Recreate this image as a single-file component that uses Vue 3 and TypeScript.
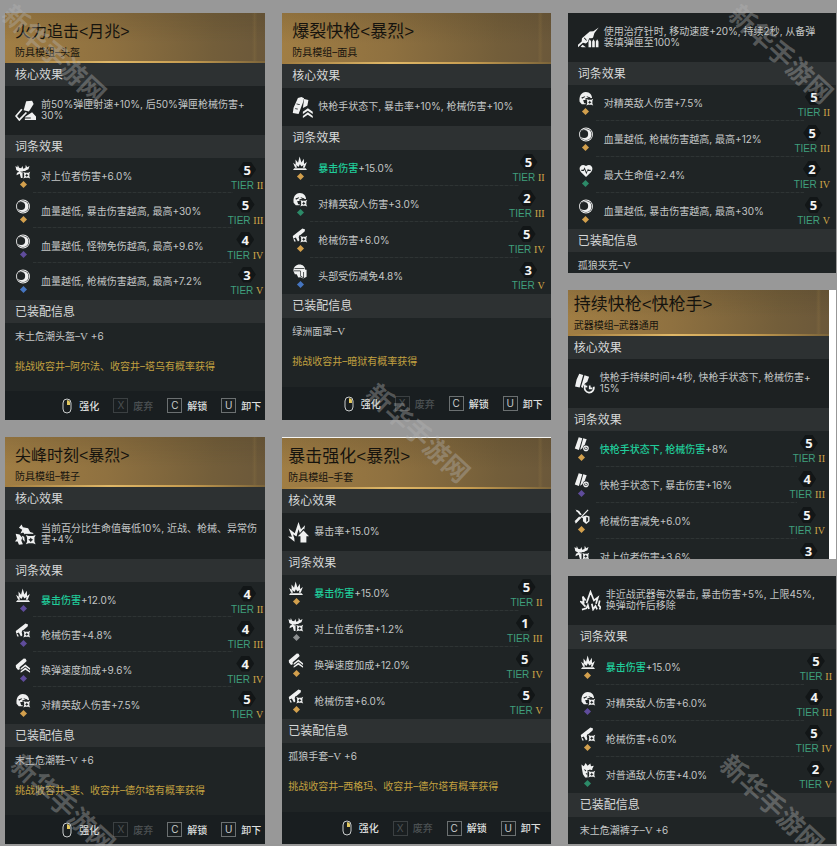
<script setup lang="ts">
type Grade = 'gold' | 'purple' | 'blue' | 'green' | 'gray'

interface Affix {
  icon: string
  grade: Grade
  hot?: string
  text: string
  level: number
}

interface Card {
  id: string
  look: string[]
  title?: string
  kind?: string
  core: string
  coreIcon: string
  affixes: Affix[]
  gear?: string
  plus?: string
  source?: string
  actions?: boolean
}

const tiers = ['II', 'III', 'IV', 'V']

const actions = [
  { key: 'X', label: '废弃', disabled: true },
  { key: 'C', label: '解锁', disabled: false },
  { key: 'U', label: '卸下', disabled: false },
]

const columns: Card[][] = [
  [
    {
      id: 'fire',
      look: [],
      title: '火力追击<月兆>',
      kind: '防具模组–头盔',
      core: '前50%弹匣射速+10%, 后50%弹匣枪械伤害+\n30%',
      coreIcon: 'magUp',
      affixes: [
        { icon: 'deer', grade: 'gold', text: '对上位者伤害+6.0%', level: 5 },
        { icon: 'moon', grade: 'gold', text: '血量越低, 暴击伤害越高, 最高+30%', level: 5 },
        { icon: 'moon', grade: 'purple', text: '血量越低, 怪物免伤越高, 最高+9.6%', level: 4 },
        { icon: 'moon', grade: 'blue', text: '血量越低, 枪械伤害越高, 最高+7.2%', level: 3 },
      ],
      gear: '末土危潮头盔–',
      plus: '+6',
      source: '挑战收容井–阿尔法、收容井–塔乌有概率获得',
      actions: true,
    },
    {
      id: 'peak',
      look: [],
      title: '尖峰时刻<暴烈>',
      kind: '防具模组–鞋子',
      core: '当前百分比生命值每低10%, 近战、枪械、异常伤\n害+4%',
      coreIcon: 'beast',
      affixes: [
        { icon: 'crit', grade: 'purple', hot: '暴击伤害', text: '+12.0%', level: 4 },
        { icon: 'gun', grade: 'purple', text: '枪械伤害+4.8%', level: 4 },
        { icon: 'reload', grade: 'purple', text: '换弹速度加成+9.6%', level: 4 },
        { icon: 'elite', grade: 'gold', text: '对精英敌人伤害+7.5%', level: 5 },
      ],
      gear: '末土危潮鞋–',
      plus: '+6',
      source: '挑战收容井–斐、收容井–德尔塔有概率获得',
      actions: true,
    },
  ],
  [
    {
      id: 'burst',
      look: ['roomy', 'tall-foot'],
      title: '爆裂快枪<暴烈>',
      kind: '防具模组–面具',
      core: '快枪手状态下, 暴击率+10%, 枪械伤害+10%',
      coreIcon: 'magChevron',
      affixes: [
        { icon: 'crit', grade: 'gold', hot: '暴击伤害', text: '+15.0%', level: 5 },
        { icon: 'elite', grade: 'green', text: '对精英敌人伤害+3.0%', level: 2 },
        { icon: 'gun', grade: 'gold', text: '枪械伤害+6.0%', level: 5 },
        { icon: 'head', grade: 'blue', text: '头部受伤减免4.8%', level: 3 },
      ],
      gear: '绿洲面罩–',
      source: '挑战收容井–暗狱有概率获得',
      actions: true,
    },
    {
      id: 'crit',
      look: ['roomy', 'near', 'edge-top'],
      title: '暴击强化<暴烈>',
      kind: '防具模组–手套',
      core: '暴击率+15.0%',
      coreIcon: 'burstUp',
      affixes: [
        { icon: 'crit', grade: 'gold', hot: '暴击伤害', text: '+15.0%', level: 5 },
        { icon: 'deer', grade: 'gray', text: '对上位者伤害+1.2%', level: 1 },
        { icon: 'reload', grade: 'gold', text: '换弹速度加成+12.0%', level: 5 },
        { icon: 'gun', grade: 'gold', text: '枪械伤害+6.0%', level: 5 },
      ],
      gear: '孤狼手套–',
      plus: '+6',
      source: '挑战收容井–西格玛、收容井–德尔塔有概率获得',
      actions: true,
    },
  ],
  [
    {
      id: 'jacket',
      look: ['short', 'wide-end'],
      core: '使用治疗针时, 移动速度+20%, 持续2秒, 从备弹\n装填弹匣至100%',
      coreIcon: 'syringe',
      affixes: [
        { icon: 'elite', grade: 'gold', text: '对精英敌人伤害+7.5%', level: 5 },
        { icon: 'moon', grade: 'gold', text: '血量越低, 枪械伤害越高, 最高+12%', level: 5 },
        { icon: 'heart', grade: 'green', text: '最大生命值+2.4%', level: 2 },
        { icon: 'moon', grade: 'gold', text: '血量越低, 暴击伤害越高, 最高+30%', level: 5 },
      ],
      gear: '孤狼夹克–',
    },
    {
      id: 'lasting',
      look: ['near', 'cropped'],
      title: '持续快枪<快枪手>',
      kind: '武器模组–武器通用',
      core: '快枪手持续时间+4秒, 快枪手状态下, 枪械伤害+\n15%',
      coreIcon: 'magClock',
      affixes: [
        { icon: 'mags', grade: 'gold', hot: '快枪手状态下, 枪械伤害', text: '+8%', level: 5 },
        { icon: 'mags', grade: 'purple', text: '快枪手状态下, 暴击伤害+16%', level: 4 },
        { icon: 'guard', grade: 'gold', text: '枪械伤害减免+6.0%', level: 5 },
        { icon: 'deer', grade: 'blue', text: '对上位者伤害+3.6%', level: 3 },
      ],
    },
    {
      id: 'trousers',
      look: ['roomy', 'far', 'short'],
      core: '非近战武器每次暴击, 暴击伤害+5%, 上限45%,\n换弹动作后移除',
      coreIcon: 'burst',
      affixes: [
        { icon: 'crit', grade: 'gold', hot: '暴击伤害', text: '+15.0%', level: 5 },
        { icon: 'elite', grade: 'purple', text: '对精英敌人伤害+6.0%', level: 4 },
        { icon: 'gun', grade: 'gold', text: '枪械伤害+6.0%', level: 5 },
        { icon: 'brute', grade: 'green', text: '对普通敌人伤害+4.0%', level: 2 },
      ],
      gear: '末土危潮裤子–',
      plus: '+6',
    },
  ],
]

// Each glyph is a list of layers: w = filled white, d = filled in the panel colour, l = white line.
type Layer = ['w' | 'd' | 'l', string]
const star: Layer[] = [
  ['d', 'M7.5 7.5h8.5v8.5h-8.5z'],
  ['w', 'M8.3 8.3l2 .9h3.4l2-.9-.9 2v3.2l.9 2-2-.9h-3.4l-2 .9.9-2v-3.2z'],
  ['d', 'M12 10.2l.7 1.2 1.2.6-1.2.7-.7 1.2-.7-1.2-1.2-.7 1.2-.6z'],
]
const glyphs: Record<string, Layer[]> = {
  moon: [
    ['w', 'M8 .6a7.4 7.4 0 1 1 0 14.8a7.4 7.4 0 1 1 0-14.8z'],
    ['d', 'M8 1.5a6.5 6.5 0 1 1 0 13a6.5 6.5 0 1 1 0-13z'],
    ['w', 'M8 2.1a5.9 5.9 0 1 1 0 11.8a5.9 5.9 0 1 1 0-11.8z'],
    ['d', 'M6 3.2a4.3 4.3 0 1 1 0 8.6a4.3 4.3 0 1 1 0-8.6z'],
  ],
  heart: [
    ['w', 'M8 15L2.5 9.5C-1 5.5 3-.5 8 3.2C13-.5 17 5.5 13.5 9.5z'],
    ['d', 'M3 7.300h2.200L6.500 4.500l2 5.200 1.600-3.500.8 1.100H13v1.200h-2.800l-.3-.5L8.400 12 6.400 7l-.7 1.500H3z'],
  ],
  crit: [
    ['w', 'M.5 15l1.400-2h12.200l1.400 2z'],
    ['w', 'M2.800 12.600L.6 7.200l2.800 2L3.200 3.600l2.700 3.600L7.600.5l1.900 6.400 2.600-4 .2 5.500 3-1.900-2.300 6.100h-2l.8-3-2.300 1.600L7.900 8.800l-1.500 2.900L4 9.500l.8 3.100z'],
  ],
  deer: [
    ['w', 'M0 2l2 1.500L2.500 1l1.300 3L6 4.500 7.600 2l.5 3 2.400-.7L11 .8l1.400 2.700L15 2l-1.200 3.600-3 1.200-.8 2.400-.5 5.800H5.800L4.500 10.500 1 12l.6-2.700L4 8.300.8 6.300z'],
    ['d', 'M5.300 7.500l1.500.8-.7 1zM8.800 8.300l-1 1-.2-1z'],
    ...star,
  ],
  elite: [
    ['w', 'M1.200 11.500c-1-6 2-10.500 6.500-10.500s6.800 3.300 6.800 7.500l-1 3-1 2.500H3.500z'],
    ['d', 'M3 7l4-1.500v1L3.800 8.200zM8.800 5.500l4 1.500-.8 1-3.200-1.500zM5 9.500h3v3.200l-2 .3z'],
    ...star,
  ],
  brute: [
    ['w', 'M1.500 6L1 1.500l2.500 2L5.500 0l2 3L10.500.5l.7 3 3-.5-1.700 3.500.4 5L9 15.500H5L2.600 12z'],
    ['d', 'M3.500 6.500l2.700 1.300-1 1.200zM11 6.500L8.500 7.800l.7 1zM5.400 11h2v2.300z'],
    ...star,
  ],
  gun: [
    ['w', 'M.3 8.600L10.600.4l2.800 1.200-.5 2-6 5.200-.3 1.200 1 3-1.800 1.500-2.300-4.300L.8 11.500z'],
    ['w', 'M1 12.300l1.300-.7 1.200 2.600-1.200.5z'],
    ...star,
  ],
  reload: [
    ['w', 'M.3 7.800L8.800.6l2 .2 1.100 2.500-3.300 3-4.200 3.500.2 2.200-1.900.8L.5 10z'],
    ['w', 'M5.500 10.800l5-4 5 4v2l-5-3.800-5 3.800zM5.500 14l5-3.800 5 3.800v1.800l-5-3.400-5 3.400z'],
  ],
  head: [
    ['w', 'M1 7.500C1 3 4 .6 7.500.6S13.300 3 13.600 6H15v7.500l-3.500 2-3-1.500-2.300.5L4.400 11H2.500z'],
    ['d', 'M2.200 4.300h10.500v.8H2zM1.500 7h7v.8h-7zM8.300 7.500H9v5l2.500 1.800V8.500h.8v7l-4-2.500z'],
  ],
  guard: [
    ['l', 'M1 15L14.500 1M2 1.800l2.200 1 3 3.500M8.300 8.500l1 1'],
    ['w', 'M0 13l5-5 1.500 1.200L2 14.500zM1 .5l4 1.500 2 3.500-1.500.5z'],
    ['w', 'M9 8l3.500-1L16 8v5l-3.500 3L9 13z'],
    ['d', 'M12.500 8.500l2 .5v3.400l-2 1.800z'],
  ],
  mags: [
    ['w', 'M4.500.3l3.800 1-3.600 12.500-4.400-1.500zM9.300 1.300l3.700 1.200-3 8.500-4 2.500z'],
    ['d', 'M12.200 8.600a3.600 3.600 0 1 1 0 7.200a3.600 3.600 0 1 1 0-7.200z'],
    ['l', 'M12.200 9.800a2.400 2.400 0 1 1 0 4.800a2.400 2.400 0 1 1 0-4.800zM12 10.800v1.500h1.200'],
  ],
  magUp: [
    ['w', 'M8.500 1l4.500-.5 1.200 2.500-3.600 5.800-4-1z'],
    ['l', 'M5.200 7L.8 12.200l2.500 3L8.700 9.500'],
    ['w', 'M8 12.500l5-3.200 3 3.200v2.800H7.500V14H12v-.7H7.500z'],
  ],
  magChevron: [
    ['w', 'M4.500.8L7.200 0l2 1-1 3.500L5 13l-4.400-.8.6-4zM9.200 1.500l3.300.7-.8 4.500-3.400 1.600z'],
    ['d', 'M3.500 5l2.500.5-.2.6-2.400-.5zM2.500 8.500l2 .4-.2.700-2-.4z'],
    ['d', 'M6.700 11.200L12 6.700l4.400 4V16H7z'],
    ['w', 'M8.300 11.300l3.800-2.800 3.700 2.800V13L12 10.500 8.300 13zM8.300 14.500l3.800-2.800 3.700 2.800V16L12 13.500 8.300 16z'],
  ],
  magClock: [
    ['w', 'M4 .5l3 1L4.300 11l-3.500-.8L2 5zM8 1.800l3.500 1L10 7l-3.600 4.500-1-1z'],
    ['d', 'M11.500 6.700a4.500 4.500 0 1 1 0 9a4.500 4.500 0 1 1 0-9z'],
    ['l', 'M8.400 10a3.500 3.500 0 1 0 6.600.5M12 9.500v2.200h2M8 8.800l.4 1.700 1.700-.3'],
  ],
  syringe: [
    ['w', 'M15.800.3L12.500 4.500 11.500 8 6 12.500 3.800 12 0 15.500v-2L2.800 11 3 8.500l6-5 2.700-.2z'],
    ['d', 'M5 8l1.800 2-.5.5L4.500 8.500zM7 13l1.500-4.500H16V16H7z'],
    ['w', 'M8 11l1-1.700 1 1.700v4.500H8zM10.800 11l1-1.700 1 1.700v4.500h-2zM13.600 11l1-1.700 1 1.700v4.500h-2zM2 15l1.500-1.500 2.500 2H3z'],
  ],
  beast: [
    ['w', 'M5 .3L6 2.500l4 .7 1.500 2.800 2.500.8-.5 3H9L6.200 6.500l-2 .8 1.300-3L3 2.800zM.5 7.500l3 .5 2 2.500-.7 2L6 15.500l-3 .3-1-2.500H0l1.500-2z'],
    ...star,
    ['w', 'M5.300 9l1.700.8.5 3.800L6 12z'],
  ],
  burst: [
    ['l', 'M4.300 8l-2.200-3 .7 4.500L.7 9l3.500 3.700M5 10l3-8.500L10.600 8l3-2.300-1.400 4.800M1.500 15l3.300-1 1.200-2.500.8 3M9 10.500l1 4.300 1.800-2.600 1.200 2.600M15 8l-.8 3.600 1.300 1.300-.5 2'],
  ],
  burstUp: [
    ['w', 'M5 15L0 11l3 .2L.5 5l4.700 3.500L8 0l1.900 5.500L13 2.500l-.8 4-3 2.500L8 5.500 6.500 11 3.800 9.300l1 3z'],
    ['d', 'M11.800 5.200L16 9.500V16H8.500v-4H6z'],
    ['w', 'M11.800 6.500l4.200 4.300h-2V15.700H9.500v-4.900h-2z'],
  ],
}

const marks = ['a', 'b', 'c', 'd', 'e']
</script>

<template>
  <main class="page" lang="zh-CN">
    <div v-for="(column, c) in columns" :key="c" class="column" :class="{ slim: c === 0 }">
      <article v-for="card in column" :key="card.id" class="card" :class="card.look">
        <header v-if="card.title" class="head">
          <h2>{{ card.title }}</h2>
          <p>{{ card.kind }}</p>
        </header>
        <h3 v-if="card.title" class="bar">核心效果</h3>
        <div class="core">
          <svg viewBox="0 0 16 16" aria-hidden="true">
            <path v-for="(g, i) in glyphs[card.coreIcon]" :key="i" :class="g[0]" :d="g[1]" />
          </svg>
          <p>{{ card.core }}</p>
        </div>
        <h3 class="bar">词条效果</h3>
        <ul class="rows">
          <li v-for="(affix, n) in card.affixes" :key="n">
            <span class="sign">
              <svg viewBox="0 0 16 16" aria-hidden="true">
                <path v-for="(g, i) in glyphs[affix.icon]" :key="i" :class="g[0]" :d="g[1]" />
              </svg>
              <i class="gem" :class="affix.grade"></i>
            </span>
            <span class="text"><em v-if="affix.hot">{{ affix.hot }}</em>{{ affix.text }}</span>
            <span class="tier">
              <b>{{ affix.level }}</b>
              <span>TIER <span class="roman">{{ tiers[n] }}</span></span>
            </span>
          </li>
        </ul>
        <template v-if="card.gear">
          <h3 class="bar">已装配信息</h3>
          <div class="info">
            <p>{{ card.gear }}<span class="roman">V</span> {{ card.plus }}</p>
            <p v-if="card.source" class="source">{{ card.source }}</p>
          </div>
        </template>
        <footer v-if="card.actions" class="foot">
          <button type="button" class="enhance">
            <svg class="mouse" viewBox="0 0 10 16" aria-hidden="true">
              <rect x="1" y="1" width="8" height="14" rx="4" />
              <path d="M5 2.2h.5a2.5 2.5 0 0 1 2.5 2.5V7H5z" />
            </svg>强化
          </button>
          <button v-for="a in actions" :key="a.key" type="button" :disabled="a.disabled">
            <kbd>{{ a.key }}</kbd>{{ a.label }}
          </button>
        </footer>
      </article>
    </div>
    <div class="marks" aria-hidden="true">
      <span v-for="m in marks" :key="m" :class="m">新华手游网</span>
    </div>
  </main>
</template>

<style>
body {
  background: #989898;
}
</style>

<style scoped>
.page {
  position: relative;
  box-sizing: border-box;
  padding: 13px 1px 2px 5px;
  display: grid;
  grid-template-columns: 260fr 268fr 268fr;
  gap: 17px;
  overflow: hidden;
  color: #c3c6c6;
  font: 10px/14px Inter, "Noto Sans CJK SC", sans-serif;
}
h2,
h3,
p,
ul {
  margin: 0;
  padding: 0;
  font-weight: 400;
}
.column {
  min-width: 0;
  display: flex;
  flex-direction: column;
  gap: 17px;
}
.card {
  --inset: 10px;
  --end: 4px;
  --bar: 23px;
  --row: 36px;
  flex: 1 1 auto;
  display: flex;
  flex-direction: column;
  background: #1f2425;
}
.slim .card {
  --end: 2px;
  --row: 35px;
  --foot: 29px;
}
.roomy {
  --bar: 24px;
  --end: 6px;
}
.near {
  --inset: 6px;
}
.far {
  --inset: 12px;
  --end: 4px;
}
.wide-end {
  --end: 6px;
}
.tall-foot {
  --foot: 33px;
}
.edge-top {
  --end: 8px;
  --foot: 32px;
  border-top: 1px solid #f4f4f2;
}
.short {
  flex: 0 0 auto;
}
.cropped {
  flex: 1 1 0;
  min-height: 0;
  overflow: hidden;
  border-right: 7px solid #fff;
}
.head {
  flex: none;
  padding: 8px var(--inset) 4px;
  color: #15130e;
  background:
    linear-gradient(90deg, #a07c40, #e0b868 40%, #c69c50 70%, #7b643a) left bottom / 100% 2px no-repeat,
    linear-gradient(90deg, transparent 95%, #a384482e 96%, transparent 97%),
    linear-gradient(180deg, #3a301c2b, transparent 60%),
    linear-gradient(95deg, #a17e44, #8f7140 40%, #735e3a 80%, #6b583a);
}
.roomy .head {
  padding-bottom: 5px;
}
.cropped .head {
  padding-top: 4px;
}
.head h2 {
  margin-bottom: 2px;
  font: 17px/22px "Liberation Sans", "Noto Sans CJK SC", sans-serif;
}
.slim .head h2 {
  font-size: 16px;
}
.bar {
  flex: none;
  padding-left: var(--inset);
  height: var(--bar);
  background: #2d3132;
  color: #d6d8d8;
  font-size: 12px;
  line-height: var(--bar);
}
.core {
  flex: none;
  display: flex;
  align-items: center;
  padding-left: var(--inset);
  background: #1d2122;
}
.core svg {
  flex: none;
  width: 21px;
  height: 21px;
  margin-right: 5px;
}
.core p {
  padding: 13px 0 14px;
  line-height: 11px;
  white-space: pre;
}
.rows {
  flex: 1 0 auto;
  display: flex;
  flex-direction: column;
  list-style: none;
}
.slim .rows {
  padding-bottom: 2px;
}
.rows li {
  flex: 1 0 var(--row);
  display: flex;
  align-items: center;
  padding: 0 var(--end) 0 var(--inset);
}
.rows li:not(:last-child) {
  background: repeating-linear-gradient(90deg, #2e3434 0 3px, #252a2b 3px 5px) 28px 100% / calc(100% - 60px) 1px no-repeat;
}
.sign {
  width: 16px;
  margin-right: 10px;
  display: flex;
  flex-direction: column;
  align-items: center;
  gap: 3px;
}
.sign svg {
  width: 16px;
  height: 15px;
}
.w {
  fill: #f0f1f1;
}
.d {
  fill: #1f2425;
}
.l {
  fill: none;
  stroke: #f0f1f1;
  stroke-width: 1.3;
}
.gem {
  width: 5px;
  height: 5px;
  margin-bottom: 1px;
  transform: rotate(45deg);
  background: #d3a04d;
}
.gem.purple {
  background: #5f4c9b;
}
.gem.blue {
  background: #4575c0;
}
.gem.green {
  background: #2c8a68;
}
.gem.gray {
  background: #8c8f90;
}
.text {
  flex: 1;
  white-space: nowrap;
}
.text em {
  font-style: normal;
  font-weight: 500;
  color: #20cc9a;
}
.tier {
  display: flex;
  flex-direction: column;
  align-items: center;
  gap: 1px;
  padding-top: 3px;
  color: #3f9f7d;
  font: 10px/14px "Liberation Sans", Arial, sans-serif;
  white-space: nowrap;
}
.tier b {
  width: 18px;
  height: 16px;
  clip-path: polygon(30% 0, 70% 0, 100% 50%, 70% 100%, 30% 100%, 0 50%);
  background: #121617;
  color: #f2f3f3;
  font: 700 13px/16px "Noto Sans", sans-serif;
  text-align: center;
}
.roman {
  font-family: "Liberation Serif", "Times New Roman", serif;
}
.tier .roman {
  color: #d0a749;
}
.info {
  flex: none;
  padding: 6px 0 18px var(--inset);
  white-space: nowrap;
}
.info .roman {
  font-size: 11px;
  line-height: 11px;
}
.roomy .info {
  padding-bottom: 19px;
}
.short .info {
  padding-bottom: 1px;
}
.far .info {
  padding-bottom: 7px;
}
.source {
  margin-top: 16px;
  color: #c2a140;
}
.foot {
  flex: none;
  box-sizing: border-box;
  height: var(--foot);
  padding-right: calc(var(--end) + 2px);
  display: flex;
  align-items: center;
  justify-content: flex-end;
  gap: 14px;
  background: #191e20;
}
.foot button {
  display: flex;
  align-items: center;
  gap: 5px;
  padding: 0;
  border: 0;
  background: none;
  color: #dcdede;
  font: 500 10px/16px Inter, "Noto Sans CJK SC", sans-serif;
}
.foot .enhance {
  gap: 7px;
}
.foot button:disabled {
  color: #4b5052;
}
.foot kbd {
  box-sizing: border-box;
  width: 15px;
  height: 15px;
  border: 1px solid #6b7071;
  color: #c9cccc;
  font: 10px/13px Inter, sans-serif;
  text-align: center;
}
.foot button:disabled kbd {
  border-color: #3b4042;
  color: #4b5052;
}
.mouse {
  width: 10px;
  height: 16px;
}
.mouse rect {
  fill: none;
  stroke: #c9cccc;
  stroke-width: 1;
}
.mouse path {
  fill: #e2c860;
}
.marks span {
  position: absolute;
  width: 132px;
  height: 30px;
  margin: -15px 0 0 -66px;
  rotate: 43deg;
  color: #b4b4b461;
  font: 700 26px/30px "Noto Sans CJK SC", sans-serif;
  text-align: center;
  white-space: nowrap;
  pointer-events: none;
}
.marks .a {
  left: 55px;
  top: 53px;
}
.marks .b {
  left: calc(100% - 55px);
  top: 53px;
}
.marks .c {
  left: 50%;
  top: 50%;
}
.marks .d {
  left: 64px;
  top: calc(100% - 60px);
}
.marks .e {
  left: calc(100% - 64px);
  top: calc(100% - 60px);
}
</style>
